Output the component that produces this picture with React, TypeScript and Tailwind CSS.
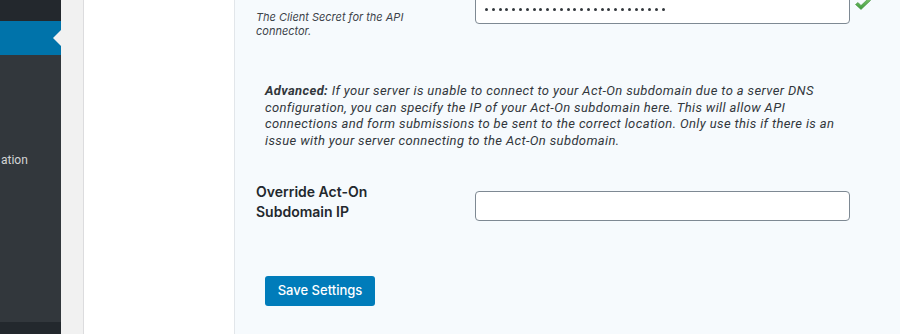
import React from "react";

const font = { fontFamily: "Inter, 'Noto Sans', 'Liberation Sans', sans-serif" };
const roboto = { fontFamily: "Roboto, 'Noto Sans', 'Liberation Sans', sans-serif" };

function Check() {
  return (
    <svg width="16" height="13" viewBox="0 0 16 13" className="block">
      <defs>
        <linearGradient id="g" x1="0" y1="0" x2="0" y2="1">
          <stop offset="0" stopColor="#7fc46f" />
          <stop offset="1" stopColor="#3c9a3a" />
        </linearGradient>
      </defs>
      <path d="M0.5 6.5 L3 4.5 L6 7.5 L13.5 0.5 L15.5 2.5 L6 11.5 Z" fill="url(#g)" stroke="#3f8f3c" strokeWidth="0.6" />
    </svg>
  );
}

const dots = Array.from({ length: 27 });

export default function App() {
  return (
    <div className="flex h-[334px] w-[900px] overflow-hidden" style={font}>
      {/* admin sidebar */}
      <div className="flex w-[61px] shrink-0 flex-col overflow-hidden bg-[#32373c]">
        <div className="h-[21px] bg-[#23282d]" />
        <div className="relative h-[34px] bg-[#0073aa]">
          <div className="absolute right-0 top-[9px] h-0 w-0 border-y-[8px] border-r-[8px] border-y-transparent border-r-[#f1f1f1]" />
        </div>
        <div className="flex-1">
          <div className="mt-[96px] h-[18px] whitespace-nowrap pl-[1px] text-[12px] leading-[18px] text-[#d2d4d6]" style={roboto}>
            ation
          </div>
        </div>
        <div className="h-[12px] bg-[#23282d]" />
      </div>
      {/* gray gutter */}
      <div className="w-[23px] shrink-0 border-r border-[#dcdcde] bg-[#f1f1f1]" />
      {/* white panel */}
      <div className="w-[151px] shrink-0 border-r border-[#e2e6ea] bg-white" />
      {/* content */}
      <div className="flex-1 bg-[#f6fafd] text-[#23282d]">
        <div className="flex pl-[21px]">
          <div className="w-[219px] pt-[10px] text-[11px] italic leading-[14px] text-[#3c434a]">
            The Client Secret for the API
            <br />
            connector.
          </div>
          <div className="-mt-[7px] flex items-start">
            <div className="flex h-[31px] w-[375px] items-center gap-[3.8px] rounded-[4px] border border-[#7e8993] bg-white pl-[9px] pt-[2px]" aria-label="password">
              {dots.map((_, i) => (
                <span key={i} className="h-[3px] w-[3px] rounded-full bg-[#32373c]" />
              ))}
            </div>
            <div className="ml-[5px] mt-[5px]">
              <Check />
            </div>
          </div>
        </div>

        <p className="mt-[45px] w-[614px] pl-[30px] text-[13px] italic leading-[16.7px] tracking-[0.37px] text-[#32373c]" style={roboto}>
          <span className="font-bold">Advanced:</span> If your server is unable to connect to your Act-On subdomain due to a server DNS configuration, you can specify the IP of your Act-On subdomain here. This will allow API connections and form submissions to be sent to the correct location. Only use this if there is an issue with your server connecting to the Act-On subdomain.
        </p>

        <div className="mt-[32px] flex pl-[21px]">
          <div className="w-[219px] text-[14px] font-semibold leading-[20px] text-[#23282d]">
            Override Act-On
            <br />
            Subdomain IP
          </div>
          <div className="mt-[9px] h-[30px] w-[375px] rounded-[4px] border border-[#7e8993] bg-white" />
        </div>

        <div className="mt-[54px] pl-[30px]">
          <button className="h-[30px] w-[110px] rounded-[3px] bg-[#007cba] text-[13px] font-medium text-white">
            Save Settings
          </button>
        </div>
      </div>
    </div>
  );
}
